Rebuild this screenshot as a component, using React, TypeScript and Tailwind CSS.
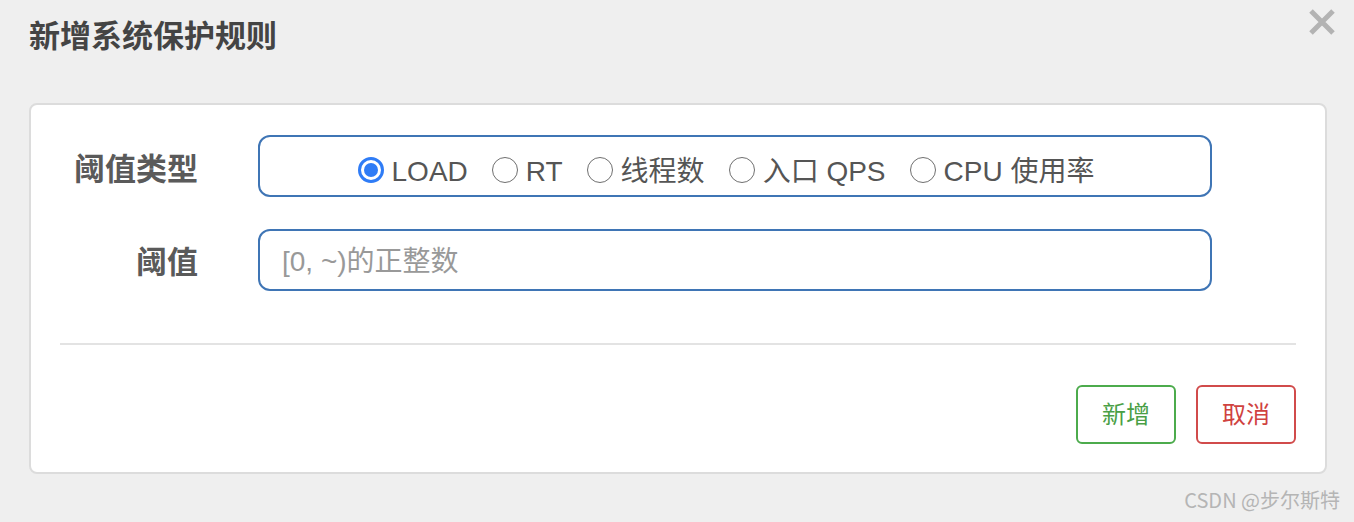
import React from "react";

const font = { fontFamily: '"Liberation Sans", "Noto Sans CJK SC", sans-serif' };

function Radio({ label, checked }: { label: string; checked?: boolean }) {
  return (
    <label className="flex items-center gap-[8px]">
      {checked ? (
        <span className="w-[26px] h-[26px] rounded-full border-[3px] border-[#2f7cf6] flex items-center justify-center bg-white">
          <span className="w-[14px] h-[14px] rounded-full bg-[#2f7cf6]" />
        </span>
      ) : (
        <span className="w-[26px] h-[26px] rounded-full border-[1.5px] border-[#6f6f6f] bg-white" />
      )}
      <span className="text-[28px] text-[#555] leading-none pt-[5px]">{label}</span>
    </label>
  );
}

export default function App() {
  return (
    <div className="w-[1354px] h-[522px] bg-[#efefef] relative overflow-hidden" style={font}>
      <div className="flex justify-between items-start h-[103px]">
        <h1 className="pl-[29px] pt-[20px] text-[31px] font-bold text-[#444] leading-[34px]">新增系统保护规则</h1>
        <svg width="28" height="28" viewBox="0 0 28 28" className="mt-[8px] mr-[18px]">
          <path d="M3 3 L25 25 M25 3 L3 25" stroke="#b3b3b3" strokeWidth="5" strokeLinecap="butt" />
        </svg>
      </div>
      <div className="ml-[29px] w-[1298px] h-[371px] bg-white border-2 border-[#dcdcdc] rounded-[8px] pt-[30px] px-[29px]">
        <div className="flex items-center">
          <div className="w-[138px] text-right text-[31px] font-bold text-[#5a5a5a] leading-none pt-[6px]">阈值类型</div>
          <div className="ml-[60px] w-[954px] h-[62px] border-2 border-[#3f75b5] rounded-[12px] flex items-center justify-center gap-[24px] pt-[7px] pr-[18px]">
            <Radio label="LOAD" checked />
            <Radio label="RT" />
            <Radio label="线程数" />
            <Radio label="入口 QPS" />
            <Radio label="CPU 使用率" />
          </div>
        </div>
        <div className="flex items-center mt-[32px]">
          <div className="w-[138px] text-right text-[31px] font-bold text-[#5a5a5a] leading-none pt-[4px]">阈值</div>
          <div className="ml-[60px] w-[954px] h-[62px] border-2 border-[#3f75b5] rounded-[12px] flex items-center pl-[22px] pt-[3px]">
            <span className="text-[28px] text-[#999] leading-none">[0, ~)的正整数</span>
          </div>
        </div>
        <div className="mt-[52px] h-[2px] bg-[#e3e3e3]" />
        <div className="flex justify-end gap-[20px] mt-[40px]">
          <button className="w-[100px] h-[59px] border-2 border-[#4cab4c] rounded-[6px] text-[24px] text-[#4a9f46] flex items-center justify-center">新增</button>
          <button className="w-[100px] h-[59px] border-2 border-[#d14b4b] rounded-[6px] text-[24px] text-[#d0423f] flex items-center justify-center">取消</button>
        </div>
      </div>
      <div className="flex justify-end pr-[14px] mt-[11px]">
        <span className="text-[20px] text-[#b5b5b5]" style={{ fontFamily: '"Noto Sans CJK SC", sans-serif' }}>CSDN @步尔斯特</span>
      </div>
    </div>
  );
}
